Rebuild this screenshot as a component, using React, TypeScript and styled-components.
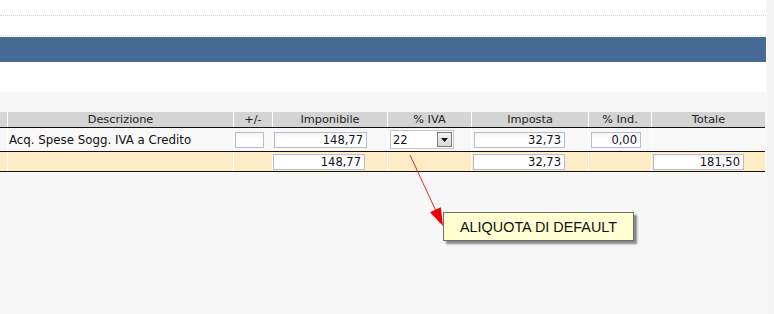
import React from "react";
import styled, { createGlobalStyle } from "styled-components";

const Global = createGlobalStyle`
  html, body { margin: 0; padding: 0; }
  body {
    background: #f7f7f7;
    font-family: "DejaVu Sans", Verdana, sans-serif;
    width: 774px;
    height: 314px;
    overflow: hidden;
  }
`;

const Page = styled.div`
  position: relative;
  display: flex;
  width: 774px;
  height: 314px;
`;

const Main = styled.div`
  width: 766px;
  display: flex;
  flex-direction: column;
  background: #f7f7f7;
`;

const SideStrip = styled.div`
  width: 8px;
  background: #f3f3f3;
  border-left: 1px solid #fbfbfb;
  box-sizing: border-box;
`;

const TopArea = styled.div`
  background: #ffffff;
  display: flex;
  flex-direction: column;
`;

const DottedRow = styled.div<{ $h: number }>`
  height: ${(p) => p.$h}px;
  border-bottom: 1px dotted #d6d6d6;
`;

const Spacer = styled.div<{ $h: number }>`
  height: ${(p) => p.$h}px;
`;

const TitleBand = styled.div`
  height: 25px;
  background: #456a93;
`;

const TableArea = styled.div`
  padding-top: 20px;
  width: 765px;
`;

const cols = "7px 225px 38px 114px 83px 116px 62px 113px";

const Row = styled.div<{ $gap: string; $border?: boolean }>`
  display: grid;
  grid-template-columns: ${cols};
  column-gap: 1px;
  background: ${(p) => p.$gap};
  border-bottom: ${(p) => (p.$border ? "1px solid #111" : "none")};
`;

const HeadCell = styled.div`
  background: #d4d4d4;
  height: 15px;
  line-height: 15px;
  font-size: 11.3px;
  color: #222;
  text-align: center;
  white-space: nowrap;
  overflow: hidden;
`;

const Cell = styled.div<{ $bg: string; $h: number; $pl?: number }>`
  background: ${(p) => p.$bg};
  height: ${(p) => p.$h}px;
  display: flex;
  align-items: center;
  padding-left: ${(p) => p.$pl ?? 0}px;
  box-sizing: border-box;
  font-size: 11.8px;
  color: #111;
  white-space: nowrap;
  overflow: hidden;
`;

const Field = styled.input<{ $w: number }>`
  width: ${(p) => p.$w}px;
  height: 16px;
  box-sizing: border-box;
  border: 1px solid #b8bccd;
  background: linear-gradient(#f4f4f4, #ffffff 40%);
  font-family: "DejaVu Sans", Verdana, sans-serif;
  font-size: 11.5px;
  color: #111;
  text-align: right;
  padding: 0 3px 0 2px;
  margin: 0;
  outline: none;
`;

const Select = styled.div`
  width: 64px;
  height: 19px;
  box-sizing: border-box;
  border: 1px solid #c6c6c6;
  background: #ffffff;
  display: flex;
  align-items: center;
  justify-content: space-between;
  padding: 0 1px 0 2px;
  font-size: 11.5px;
  color: #111;
`;

const DropButton = styled.div`
  width: 15px;
  height: 15px;
  box-sizing: border-box;
  border: 1px solid #7a7a7a;
  background: linear-gradient(#f2f2f2, #d9d9d9);
  display: flex;
  align-items: center;
  justify-content: center;
`;

const Arrow = styled.svg`
  position: absolute;
  left: 0;
  top: 0;
  pointer-events: none;
`;

const Callout = styled.div`
  position: absolute;
  left: 443px;
  top: 212px;
  width: 191px;
  height: 29px;
  box-sizing: border-box;
  border: 1px solid #6e6e6e;
  background: #ffffd2;
  box-shadow: 3px 3px 2px rgba(0, 0, 0, 0.45);
  display: flex;
  align-items: center;
  justify-content: center;
  font-family: "Liberation Sans", Arial, sans-serif;
  font-size: 14.4px;
  color: #111;
  white-space: nowrap;
`;

const headers = ["", "Descrizione", "+/-", "Imponibile", "% IVA", "Imposta", "% Ind.", "Totale"];

export default function App() {
  return (
    <>
      <Global />
      <Page>
        <Main>
          <TopArea>
            <DottedRow $h={15} />
            <DottedRow $h={19} />
            <Spacer $h={1} />
            <TitleBand />
            <Spacer $h={30} />
          </TopArea>
          <TableArea>
            <Row $gap="#ffffff" $border>
              {headers.map((h, i) => (
                <HeadCell key={i}>{h}</HeadCell>
              ))}
            </Row>
            <Row $gap="#ffffff" $border>
              <Cell $bg="#f8f8f8" $h={23} />
              <Cell $bg="#f8f8f8" $h={23} $pl={1}>
                Acq. Spese Sogg. IVA a Credito
              </Cell>
              <Cell $bg="#f8f8f8" $h={23} $pl={1}>
                <Field $w={29} readOnly value="" />
              </Cell>
              <Cell $bg="#f8f8f8" $h={23} $pl={1}>
                <Field $w={93} readOnly value="148,77" />
              </Cell>
              <Cell $bg="#f8f8f8" $h={23} $pl={2}>
                <Select>
                  <span>22</span>
                  <DropButton>
                    <svg width="7" height="4" viewBox="0 0 7 4">
                      <path d="M0 0 H7 L3.5 4 Z" fill="#111" />
                    </svg>
                  </DropButton>
                </Select>
              </Cell>
              <Cell $bg="#f8f8f8" $h={23} $pl={2}>
                <Field $w={91} readOnly value="32,73" />
              </Cell>
              <Cell $bg="#f8f8f8" $h={23} $pl={2}>
                <Field $w={50} readOnly value="0,00" />
              </Cell>
              <Cell $bg="#f8f8f8" $h={23} />
            </Row>
            <Row $gap="#ffffff" $border>
              <Cell $bg="#feecc6" $h={19} />
              <Cell $bg="#feecc6" $h={19} />
              <Cell $bg="#feecc6" $h={19} />
              <Cell $bg="#feecc6" $h={19}>
                <Field $w={92} readOnly value="148,77" />
              </Cell>
              <Cell $bg="#feecc6" $h={19} />
              <Cell $bg="#feecc6" $h={19} $pl={1}>
                <Field $w={92} readOnly value="32,73" />
              </Cell>
              <Cell $bg="#feecc6" $h={19} />
              <Cell $bg="#feecc6" $h={19} $pl={1}>
                <Field $w={91} readOnly value="181,50" />
              </Cell>
            </Row>
          </TableArea>
        </Main>
        <SideStrip />
        <Arrow width="774" height="314" viewBox="0 0 774 314">
          <line x1="410" y1="155" x2="436" y2="211" stroke="#e8262b" strokeWidth="1" />
          <polygon points="430,212.2 440.8,207.2 443,226" fill="#ee0000" />
        </Arrow>
        <Callout>ALIQUOTA DI DEFAULT</Callout>
      </Page>
    </>
  );
}
